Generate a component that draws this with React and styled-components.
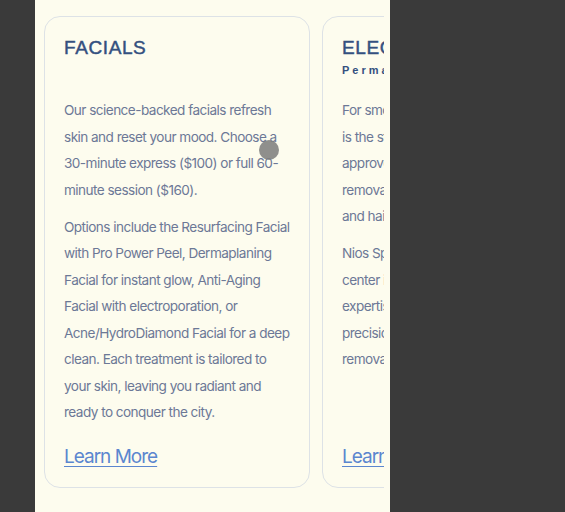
import React from 'react';
import styled, { createGlobalStyle } from 'styled-components';

const services = [
    {
        title: 'FACIALS',
        subtitle: '',
        paragraphs: [
            'Our science-backed facials refresh skin and reset your mood. Choose a 30-minute express ($100) or full 60-minute session ($160).',
            'Options include the Resurfacing Facial with Pro Power Peel, Dermaplaning Facial for instant glow, Anti-Aging Facial with electroporation, or Acne/HydroDiamond Facial for a deep clean. Each treatment is tailored to your skin, leaving you radiant and ready to conquer the city.',
        ],
    },
    {
        title: 'ELECTROLYSIS',
        subtitle: 'Permanent Hair Removal',
        paragraphs: [
            'For smooth skin, electrolysis is\u00a0the\u00a0standard, the only FDA-approved method for permanent hair removal on face and body, for all skin and\u00a0hair\u00a0types.',
            'Nios Spa’s dedicated electrolysis center\u00a0in NYC combines years of expertise\u00a0with modern tools for precision, comfort and lasting hair removal\u00a0results.',
        ],
    },
];

const App = () => {
    return (
        <>
            <GlobalStyle />
            <Page>
                <Panel>
                    <Viewport>
                        <Track>
                            {services.map((s) => (
                                <Card key={s.title}>
                                    <CardHeader>
                                        <Title>{s.title}</Title>
                                        {s.subtitle && <Subtitle>{s.subtitle}</Subtitle>}
                                    </CardHeader>
                                    <Body>
                                        {s.paragraphs.map((p, i) => (
                                            <Paragraph key={i}>{p}</Paragraph>
                                        ))}
                                    </Body>
                                    <LearnMore href="#">Learn More</LearnMore>
                                </Card>
                            ))}
                        </Track>
                    </Viewport>
                    <Pointer />
                </Panel>
            </Page>
        </>
    );
};

export default App;

const GlobalStyle = createGlobalStyle`
    html, body {
        margin: 0;
        padding: 0;
        background: #3a3a3a;
    }
    #root {
        height: 512px;
    }
`;

const Page = styled.div`
    height: 512px;
    display: flex;
    padding-left: 35px;
    background: #3a3a3a;
    overflow: hidden;
`;

const Panel = styled.div`
    position: relative;
    width: 355px;
    height: 512px;
    background: #fdfcee;
    padding: 16px 6px 0 6px;
    box-sizing: border-box;
`;

const Viewport = styled.div`
    overflow: hidden;
`;

const Track = styled.div`
    display: flex;
    gap: 12px;
    padding-left: 3px;
`;

const Card = styled.div`
    flex: 0 0 266px;
    box-sizing: border-box;
    height: 472px;
    border: 1px solid #dde2e6;
    border-radius: 16px;
    padding: 20px 19px 17px 19px;
    display: flex;
    flex-direction: column;
`;

const CardHeader = styled.div`
    flex-shrink: 0;
    height: 60px;
`;

const Title = styled.h2`
    margin: 0;
    font-family: 'Liberation Sans', Arial, sans-serif;
    font-weight: 400;
    font-size: 19px;
    letter-spacing: 0.6px;
    -webkit-text-stroke: 0.45px #34507f;
    line-height: 22px;
    color: #34507f;
`;

const Subtitle = styled.div`
    margin-top: 5px;
    font-family: 'Liberation Sans', Arial, sans-serif;
    font-weight: 700;
    font-size: 11px;
    letter-spacing: 3px;
    color: #34507f;
`;

const Body = styled.div`
    font-family: Inter, 'Noto Sans', sans-serif;
    font-size: 13.6px;
    letter-spacing: -0.55px;
    line-height: 26.5px;
    color: #6c7896;
`;

const Paragraph = styled.p`
    margin: 0 0 10.5px 0;
`;

const LearnMore = styled.a`
    margin-top: auto;
    font-family: Inter, 'Noto Sans', sans-serif;
    font-size: 19px;
    letter-spacing: -1px;
    line-height: 26px;
    color: #5b86cf;
    text-decoration: underline;
    text-underline-offset: 3px;
    text-decoration-thickness: 1px;
`;

const Pointer = styled.div`
    position: absolute;
    left: 224px;
    top: 140px;
    width: 20px;
    height: 20px;
    border-radius: 50%;
    background: rgba(128, 128, 126, 0.88);
`;
